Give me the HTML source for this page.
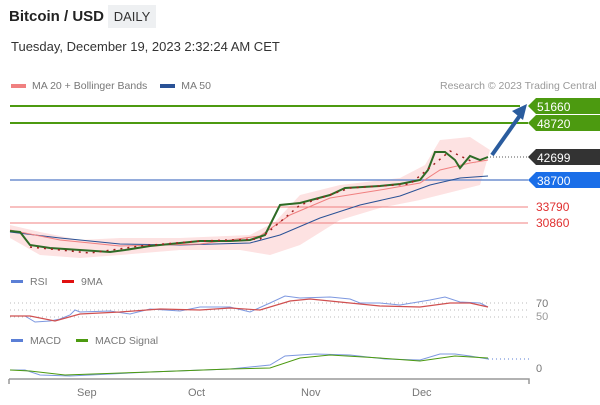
<!DOCTYPE html>
<html><head><style>
body{margin:0;width:600px;height:405px;background:#fff;font-family:"Liberation Sans",sans-serif;overflow:hidden;position:relative}
.t{position:absolute;white-space:nowrap}
</style></head><body>
<div class="t" style="left:9px;top:8px;font-size:15px;font-weight:bold;color:#222">Bitcoin / USD</div>
<div class="t" style="left:108px;top:5px;width:48px;height:23px;background:#eef0f2;font-size:13px;color:#333;line-height:23px;text-align:center">DAILY</div>
<div class="t" style="left:11px;top:39px;font-size:13px;color:#333">Tuesday, December 19, 2023 2:32:24 AM CET</div>
<div class="t" style="left:11px;top:80px;font-size:10.5px;color:#777"><span style="display:inline-block;width:15px;height:4px;background:#f08080;vertical-align:middle;margin-right:6px"></span>MA 20 + Bollinger Bands <span style="display:inline-block;width:15px;height:4px;background:#2a5296;vertical-align:middle;margin:0 6px 0 10px"></span>MA 50</div>
<div class="t" style="left:440px;top:80px;font-size:10.5px;color:#999">Research © 2023 Trading Central</div>
<svg width="600" height="405" style="position:absolute;left:0;top:0" font-family="Liberation Sans" font-size="12">
<path d="M10 225 L40 232 L80 240 L120 238 L180 238 L250 235 L275 222 L300 195 L340 185 L400 178 L425 165 L440 140 L470 137 L490 150 L480 185 L440 195 L420 200 L380 208 L340 220 L300 245 L270 255 L240 250 L180 250 L120 255 L80 258 L40 255 L10 238Z" fill="#fde2e2"/>
<line x1="10" y1="106" x2="520" y2="106" stroke="#4c9a10" stroke-width="2"/>
<line x1="10" y1="123" x2="528" y2="123" stroke="#4c9a10" stroke-width="2"/>
<line x1="10" y1="180" x2="528" y2="180" stroke="#6f8fcf" stroke-width="1.5"/>
<line x1="10" y1="207" x2="528" y2="207" stroke="#f08080" stroke-width="1"/>
<line x1="10" y1="223" x2="528" y2="223" stroke="#f08080" stroke-width="1"/>
<line x1="490" y1="157" x2="528" y2="157" stroke="#555" stroke-dasharray="1,2"/>
<path d="M10 232 L60 238 L120 244 L180 245 L250 243 L280 235 L320 218 L360 205 L400 196 L430 185 L460 178 L488 176" fill="none" stroke="#2a5296" stroke-width="1"/>
<path d="M10 230 L60 240 L120 246 L200 244 L260 236 L290 215 L330 198 L380 190 L420 183 L440 170 L470 163 L488 160" fill="none" stroke="#f08080" stroke-width="1"/>
<path d="M10 231 L20 232 L30 245 L50 248 L80 250 L110 252 L125 250 L150 246 L180 243 L200 241 L230 241 L250 240 L265 235 L275 215 L280 205 L300 203 L330 195 L345 188 L380 186 L400 184 L420 180 L428 170 L435 152 L445 152 L455 160 L460 168 L470 156 L480 160 L488 157" fill="none" stroke="#2e6b26" stroke-width="2"/>
<path d="M30 247 L90 253 L140 246 L200 241 L260 239 L300 205 L350 188 L410 184 L450 151 L475 163" fill="none" stroke="#a02020" stroke-width="1.5" stroke-dasharray="2,5"/>
<line x1="492" y1="155" x2="521" y2="114" stroke="#2a5c9e" stroke-width="4"/>
<path d="M527 104 L512 111 L523 120Z" fill="#2a5c9e"/>
<path d="M528 106 L536 98 L600 98 L600 114 L536 114Z" fill="#4c9a10"/><text x="537" y="111" fill="#fff">51660</text>
<path d="M528 123 L536 115 L600 115 L600 131 L536 131Z" fill="#4c9a10"/><text x="537" y="128" fill="#fff">48720</text>
<path d="M528 157 L536 149 L600 149 L600 165 L536 165Z" fill="#333"/><text x="537" y="162" fill="#fff">42699</text>
<path d="M528 180 L536 172 L600 172 L600 188 L536 188Z" fill="#1a6ee8"/><text x="537" y="185" fill="#fff">38700</text>
<text x="536" y="211" fill="#e03030">33790</text>
<text x="536" y="227" fill="#e03030">30860</text>
<rect x="11" y="280" width="12" height="3" fill="#5b7fd6"/><text x="30" y="285" font-size="10.5" fill="#777">RSI</text>
<rect x="62" y="280" width="12" height="3" fill="#e01010"/><text x="81" y="285" font-size="10.5" fill="#777">9MA</text>
<g stroke="#bbb" stroke-dasharray="1,3"><line x1="10" y1="303" x2="530" y2="303"/><line x1="10" y1="310" x2="530" y2="310"/><line x1="10" y1="317" x2="530" y2="317"/></g>
<text x="536" y="307" font-size="11" fill="#777">70</text><text x="536" y="320" font-size="11" fill="#999">50</text>
<path d="M10 316 L25 316 L35 322 L50 321 L60 319 L70 315 L75 310 L80 312 L110 311 L130 314 L150 309 L180 311 L200 307 L230 307 L250 312 L270 303 L285 296 L300 298 L330 297 L350 299 L360 303 L380 303 L400 305 L430 300 L445 297 L460 302 L480 303 L488 307" fill="none" stroke="#7d98e0" stroke-width="1"/>
<path d="M10 316 L30 316 L55 321 L80 314 L120 312 L160 309 L200 310 L230 308 L260 310 L290 301 L310 299 L350 303 L380 306 L420 307 L450 303 L470 303 L488 307" fill="none" stroke="#d05050" stroke-width="1.2"/>
<rect x="11" y="339" width="12" height="3" fill="#5b7fd6"/><text x="30" y="344" font-size="10.5" fill="#777">MACD</text>
<rect x="76" y="339" width="12" height="3" fill="#4c9a10"/><text x="95" y="344" font-size="10.5" fill="#777">MACD Signal</text>
<line x1="488" y1="359" x2="530" y2="359" stroke="#5b7fd6" stroke-dasharray="1,3"/>
<text x="536" y="372" font-size="11" fill="#777">0</text>
<path d="M10 370 L25 370 L40 375 L70 376 L150 372 L230 369 L270 365 L285 356 L315 354 L350 355 L385 359 L420 360 L440 354 L455 354 L470 356 L488 359" fill="none" stroke="#7d98e0" stroke-width="1"/>
<path d="M10 370 L30 371 L65 375 L150 372 L230 369 L270 368 L300 358 L330 355 L380 358 L420 361 L455 356 L488 358" fill="none" stroke="#4c9a10" stroke-width="1"/>
<path d="M9 384 L9 379 M9 379 L529 379 L529 384" fill="none" stroke="#999" stroke-width="1.5"/>
<g font-size="11" fill="#777"><text x="77" y="396">Sep</text><text x="188" y="396">Oct</text><text x="301" y="396">Nov</text><text x="412" y="396">Dec</text></g>
</svg>
</body></html>
